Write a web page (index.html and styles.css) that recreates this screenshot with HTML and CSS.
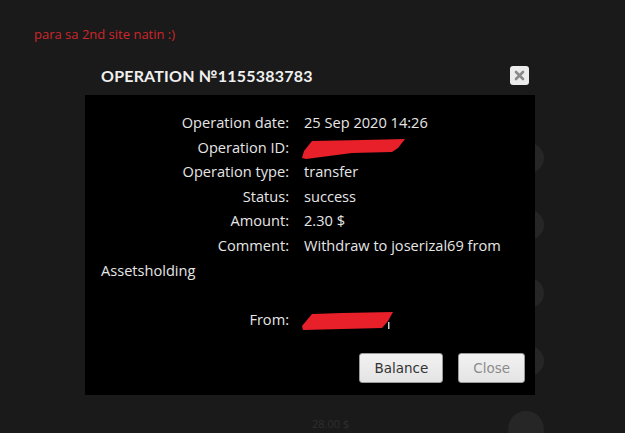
FILE: index.html
```html
<!DOCTYPE html>
<html lang="en">
<head>
    <meta charset="UTF-8">
    <title>Operation</title>
    <link rel="stylesheet" href="styles.css">
</head>
<body>
    <div class="backdrop">
        <span class="dot dot-1"></span>
        <span class="dot dot-2"></span>
        <span class="dot dot-3"></span>
        <span class="dot dot-4"></span>
        <span class="dot dot-5"></span>
        <span class="ghost">28.00 $</span>
    </div>

    <p class="note">para sa 2nd site natin :)</p>

    <div class="modal">
        <div class="modal-head">
            <h2>OPERATION №1155383783</h2>
            <button class="x-btn" aria-label="close">
                <svg width="11" height="11" viewBox="0 0 11 11">
                    <path d="M2 2 L9 9 M9 2 L2 9" stroke="#8a8a8a" stroke-width="2.6" stroke-linecap="round"/>
                </svg>
            </button>
        </div>

        <div class="modal-body">
            <p class="row"><span class="lbl">Operation date:</span>25 Sep 2020 14:26</p>
            <p class="row"><span class="lbl">Operation ID:</span><svg class="scrawl" width="104" height="20" viewBox="0 0 104 20"><polygon points="10,2 60,1 103,0 96,9 90,13 50,14 4,20 0,19 2,12" fill="#e8202a"/></svg></p>
            <p class="row"><span class="lbl">Operation type:</span>transfer</p>
            <p class="row"><span class="lbl">Status:</span>success</p>
            <p class="row"><span class="lbl">Amount:</span>2.30 $</p>
            <p class="row"><span class="lbl">Comment:</span>Withdraw to joserizal69 from Assetsholding</p>
            <p class="row">&nbsp;</p>
            <p class="row"><span class="lbl">From:</span><svg class="scrawl" width="92" height="20" viewBox="0 0 92 20"><polygon points="10,3 40,2 91,1 86,10 80,17 40,18 1,19 0,15" fill="#e8202a"/><rect x="86" y="11" width="1.5" height="7" fill="#ccc"/></svg></p>

            <div class="actions">
                <button class="btn">Balance</button>
                <button class="btn btn-off">Close</button>
            </div>
        </div>
    </div>
</body>
</html>
```

FILE: styles.css
```css
body {
    margin: 0;
    background-color: #1a1a1a;
    height: 433px;
    overflow: hidden;
    position: relative;
}

.backdrop .dot {
    position: absolute;
    width: 30px;
    height: 30px;
    border-radius: 50%;
    background-color: #262626;
}

.dot-1 { left: 514px; top: 143px; }
.dot-2 { left: 514px; top: 210px; }
.dot-3 { left: 514px; top: 278px; }
.dot-4 { left: 514px; top: 346px; }
.dot-5 { left: 508px; top: 411px; width: 36px !important; height: 36px !important; }

.ghost {
    position: absolute;
    left: 312px;
    top: 416px;
    font: 11px "Open Sans", sans-serif;
    color: #2e2e2e;
}

.note {
    margin: 0;
    padding: 26px 0 0 34px;
    font: 13px/16px "Open Sans", sans-serif;
    color: #d0262c;
}

.modal {
    position: relative;
    width: 450px;
    margin: 14px 0 0 85px;
}

.modal-head {
    display: flex;
    align-items: center;
    justify-content: space-between;
    height: 39px;
    padding: 0 6px 0 16px;
}

.modal-head h2 {
    margin: 0;
    font: 700 16px "Lato", sans-serif;
    letter-spacing: 0.2px;
    color: #f0f0f0;
}

.x-btn {
    width: 19px;
    height: 19px;
    padding: 0;
    border: none;
    border-radius: 3px;
    background-color: #ececec;
    display: flex;
    align-items: center;
    justify-content: center;
}

.modal-body {
    background-color: #000;
    height: 300px;
    box-sizing: border-box;
    padding: 15px 10px 0 16px;
}

.row {
    margin: 0;
    font: 14.6px/24.6px "Open Sans", sans-serif;
    color: #e6e6e6;
    padding-right: 6px;
}

.lbl {
    display: inline-block;
    width: 188px;
    text-align: right;
    margin-right: 15px;
}

.scrawl {
    vertical-align: middle;
    margin-left: -2px;
}

.actions {
    display: flex;
    justify-content: flex-end;
    gap: 15px;
    margin-top: 22px;
}

.btn {
    box-sizing: border-box;
    height: 30px;
    padding: 0 14px;
    border: 1px solid #9a9a9a;
    border-radius: 3px;
    background: linear-gradient(#f2f2f2, #e4e4e4);
    font: 13.5px "DejaVu Sans", sans-serif;
    color: #333;
}

.btn-off {
    color: #8c8c8c;
    padding: 0 14px;
}
```
